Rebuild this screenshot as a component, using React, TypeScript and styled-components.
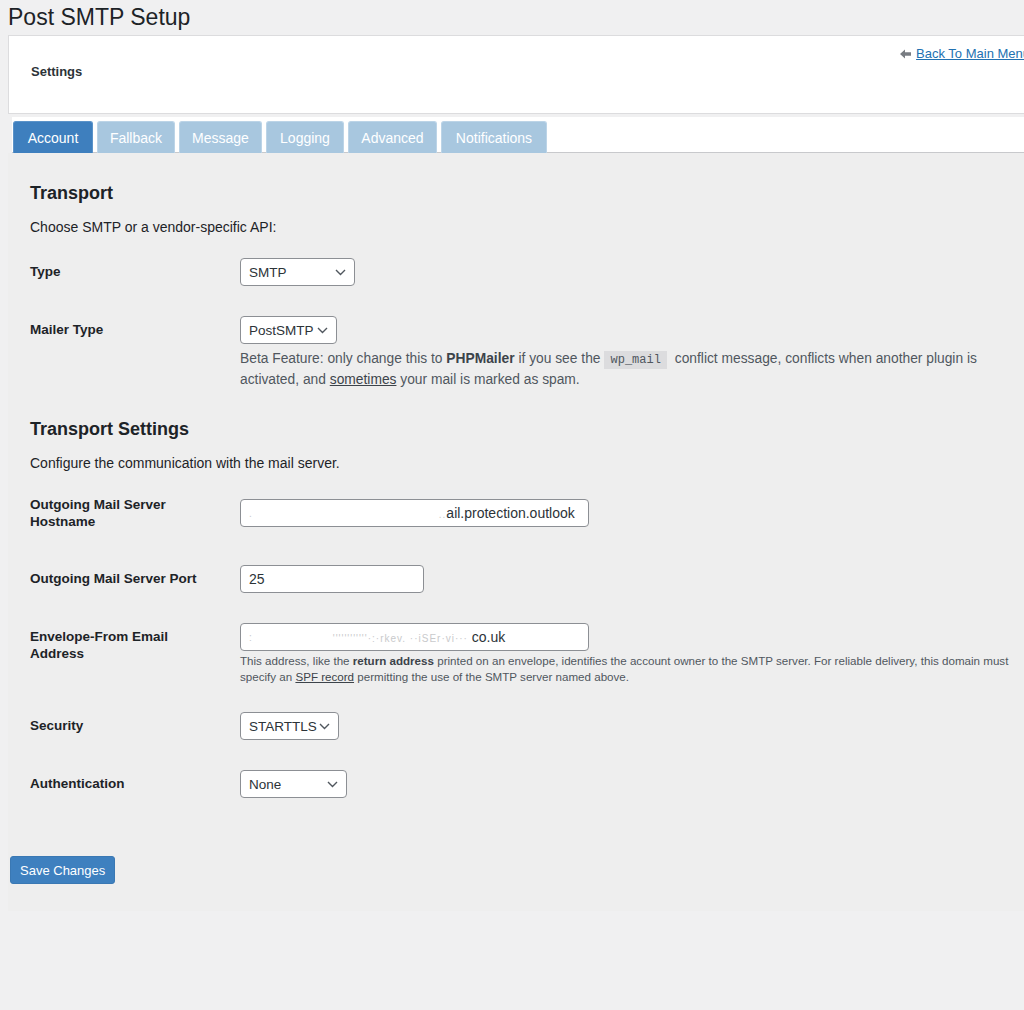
import React from 'react'
import styled, { createGlobalStyle } from 'styled-components'

const Global = createGlobalStyle`
  html, body {
    margin: 0;
    padding: 0;
    background: #f0f0f1;
    overflow-x: hidden;
  }
  body {
    font-family: "Liberation Sans", Arial, sans-serif;
    color: #1d2327;
  }
`

const Wrap = styled.div`
  width: 1060px;
  padding-left: 8px;
  padding-bottom: 100px;
`

const Title = styled.h1`
  margin: 0;
  padding-top: 4px;
  font-size: 23px;
  font-weight: 400;
  line-height: 27px;
  height: 31px;
  color: #1d2327;
`

const HeaderBox = styled.div`
  box-sizing: border-box;
  height: 79px;
  background: #fff;
  border: 1px solid #dcdcde;
  padding: 10px 37px 0 22px;
  display: flex;
  flex-direction: column;
`

const BackRow = styled.div`
  display: flex;
  justify-content: flex-end;
  align-items: center;
  gap: 5px;
  height: 16px;
`

const BackLink = styled.a`
  font-size: 13px;
  line-height: 16px;
  color: #2271b1;
  text-decoration: underline;
  cursor: pointer;
`

const SettingsLabel = styled.div`
  margin-top: 2px;
  font-size: 13px;
  font-weight: 700;
  line-height: 16px;
  color: #2c3338;
`

const TabStrip = styled.nav`
  margin: 3px 0 0 4px;
  padding: 4px 0 0 1px;
  background: #fff;
  border-bottom: 1px solid #c8c9cc;
  display: flex;
  gap: 4px;
  height: 31px;
`

const Tab = styled.div<{ $active?: boolean; $w: number }>`
  box-sizing: border-box;
  width: ${p => p.$w}px;
  height: 32px;
  display: flex;
  align-items: center;
  justify-content: center;
  font-size: 14px;
  color: #fff;
  background: ${p => (p.$active ? '#3e7fbe' : '#a8c7df')};
  border: 1px solid ${p => (p.$active ? '#5b93c9' : '#bcd4e7')};
  border-bottom: none;
  border-radius: 3px 3px 0 0;
`

const Panel = styled.div`
  background: #eeeeee;
  padding: 16px 0 27px 22px;
`

const SectionTitle = styled.h2`
  margin: 12px 0 0;
  font-size: 18px;
  font-weight: 700;
  line-height: 24px;
  color: #1d2327;
`

const Intro = styled.p`
  margin: 12px 0 6px;
  font-size: 14px;
  line-height: 20px;
  color: #1d2327;
`

const Row = styled.div<{ $extra?: number; $top?: number }>`
  display: grid;
  grid-template-columns: 210px 1fr;
  padding: ${p => 15 + (p.$top || 0)}px 0 ${p => 15 + (p.$extra || 0)}px;
`

const Label = styled.div<{ $shift?: number }>`
  padding-top: 5px;
  margin-top: ${p => p.$shift || 0}px;
  font-size: 13.5px;
  font-weight: 700;
  line-height: 17px;
  color: #1d2327;
`

const Field = styled.div`
  display: flex;
  flex-direction: column;
  align-items: flex-start;
`

const Select = styled.div<{ $w: number }>`
  box-sizing: border-box;
  width: ${p => p.$w}px;
  height: 28px;
  padding: 0 8px;
  display: flex;
  align-items: center;
  justify-content: space-between;
  background: #fff;
  border: 1px solid #8c8f94;
  border-radius: 4px;
  font-size: 13.5px;
  color: #2c3338;
`

const Input = styled.div<{ $w: number }>`
  box-sizing: border-box;
  width: ${p => p.$w}px;
  height: 28px;
  padding: 0 8px;
  display: flex;
  align-items: center;
  background: #fff;
  border: 1px solid #8c8f94;
  border-radius: 4px;
  font-size: 14px;
  color: #2c3338;
  white-space: nowrap;
  overflow: hidden;
`

const Faint = styled.span`
  color: #c9cacc;
  font-size: 10px;
  letter-spacing: 1px;
`

const Desc = styled.p<{ $small?: boolean }>`
  margin: ${p => (p.$small ? 2 : 4)}px 0 0;
  max-width: ${p => (p.$small ? 780 : 750)}px;
  font-size: ${p => (p.$small ? 11.6 : 13.8)}px;
  line-height: ${p => (p.$small ? 16 : 21)}px;
  color: #50575e;
  b {
    color: #3c434a;
  }
  a {
    color: #3c434a;
    text-decoration: underline;
  }
`

const Code = styled.code`
  display: inline-block;
  font-family: "Liberation Mono", monospace;
  font-size: 12px;
  line-height: 18px;
  background: #dcdcde;
  padding: 0 6px;
  margin: 0 4px;
  color: #50575e;
`

const SaveButton = styled.button`
  margin: 43px 0 0 -20px;
  height: 28px;
  padding: 0 9px;
  font-family: inherit;
  font-size: 13px;
  color: #fff;
  background: #3e80bf;
  border: 1px solid #3a78b3;
  border-radius: 3px;
`

const Chevron = () => (
  <svg width="11" height="7" viewBox="0 0 11 7" fill="none">
    <path d="M1 1l4.5 4.5L10 1" stroke="#50575e" strokeWidth="1.4" />
  </svg>
)

const ArrowLeft = () => (
  <svg width="11" height="10" viewBox="0 0 11 10">
    <path d="M0 5L5 0.5V3.3H11V6.7H5V9.5Z" fill="#787c82" />
  </svg>
)

const tabs: [string, number][] = [
  ['Account', 80],
  ['Fallback', 78],
  ['Message', 83],
  ['Logging', 78],
  ['Advanced', 89],
  ['Notifications', 106],
]

const App: React.FC = () => {
  return (
    <Wrap>
      <Global />
      <Title>Post SMTP Setup</Title>
      <HeaderBox>
        <BackRow>
          <ArrowLeft />
          <BackLink>Back To Main Menu</BackLink>
        </BackRow>
        <SettingsLabel>Settings</SettingsLabel>
      </HeaderBox>
      <TabStrip>
        {tabs.map(([name, w], i) => (
          <Tab key={name} $w={w} $active={i === 0}>{name}</Tab>
        ))}
      </TabStrip>
      <Panel>
        <SectionTitle>Transport</SectionTitle>
        <Intro>Choose SMTP or a vendor-specific API:</Intro>
        <Row>
          <Label>Type</Label>
          <Field>
            <Select $w={115}>SMTP <Chevron /></Select>
          </Field>
        </Row>
        <Row>
          <Label>Mailer Type</Label>
          <Field>
            <Select $w={97}>PostSMTP <Chevron /></Select>
            <Desc>
              Beta Feature: only change this to <b>PHPMailer</b> if you see the<Code>wp_mail</Code> conflict message,
              conflicts when another plugin is activated, and <a>sometimes</a> your mail is marked as spam.
            </Desc>
          </Field>
        </Row>

        <SectionTitle>Transport Settings</SectionTitle>
        <Intro>Configure the communication with the mail server.</Intro>
        <Row $top={5} $extra={5}>
          <Label $shift={-8}>Outgoing Mail Server<br />Hostname</Label>
          <Field>
            <Input $w={349}>
              <Faint>.</Faint>
              <span style={{ marginLeft: 186 }}>
                <Faint>..</Faint>ail.protection.outlook
              </span>
            </Input>
          </Field>
        </Row>
        <Row>
          <Label>Outgoing Mail Server Port</Label>
          <Field>
            <Input $w={184}>25</Input>
          </Field>
        </Row>
        <Row $extra={-3}>
          <Label>Envelope-From Email<br />Address</Label>
          <Field>
            <Input $w={349}>
              <Faint>:</Faint>
              <span style={{ marginLeft: 80 }}>
                <Faint>''''''''''''·:·rkev. ··iSEr·vi··· </Faint>co.uk
              </span>
            </Input>
            <Desc $small>
              This address, like the <b>return address</b> printed on an envelope, identifies the account owner to the SMTP
              server. For reliable delivery, this domain must specify an <a>SPF record</a> permitting the use of the SMTP
              server named above.
            </Desc>
          </Field>
        </Row>
        <Row>
          <Label>Security</Label>
          <Field>
            <Select $w={99}>STARTTLS <Chevron /></Select>
          </Field>
        </Row>
        <Row>
          <Label>Authentication</Label>
          <Field>
            <Select $w={107}>None <Chevron /></Select>
          </Field>
        </Row>
        <SaveButton>Save Changes</SaveButton>
      </Panel>
    </Wrap>
  )
}

export default App
